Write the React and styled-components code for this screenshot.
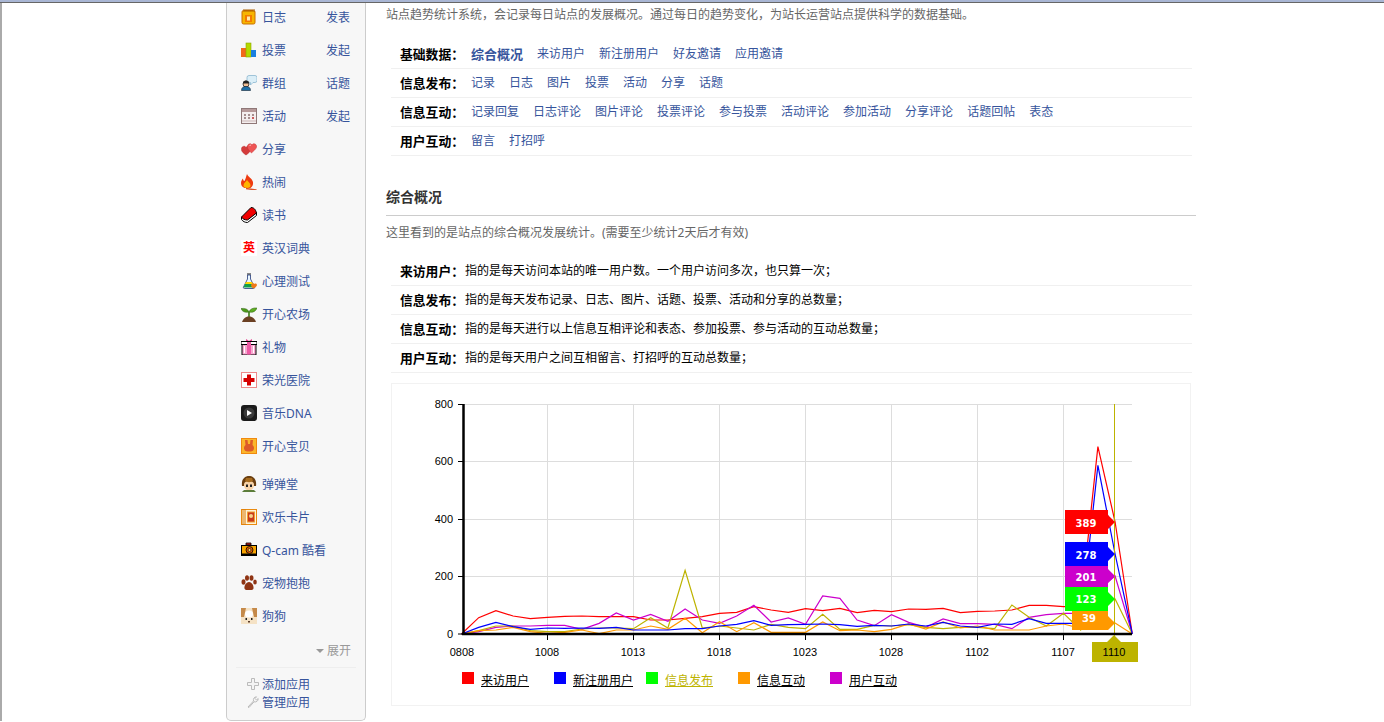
import React from "react";
import styled, { createGlobalStyle } from "styled-components";

const GlobalStyle = createGlobalStyle`
  html, body {
    margin: 0;
    height: 722px;
    overflow: hidden;
    background: #fff;
  }
  body {
    font-family: "Noto Sans", "Noto Sans CJK SC", sans-serif;
    font-size: 12px;
  }
  a {
    color: #36549c;
    text-decoration: none;
  }
`;

// app icons, 16x16
const icons = {
  blog: (
    <>
      <rect x="1" y="1.500" width="13" height="13.500" rx="1.500" fill="#f7b500" stroke="#c96f00" />
      <path d="M3 0v3M5 0v3M7 0v3M9 0v3M11 0v3M13 0v3" stroke="#a85c00" />
      <rect x="4" y="6" width="7" height="7" fill="#f47a00" />
      <rect x="6" y="7.500" width="3" height="4" fill="#ffe9b0" />
    </>
  ),
  vote: (
    <>
      <rect x="0" y="6" width="5" height="9" fill="#f26a1b" />
      <rect x="5" y="1" width="5" height="14" fill="#b5d900" stroke="#8aa800" strokeWidth=".6" />
      <rect x="10" y="8" width="5" height="7" fill="#1a7fe0" />
    </>
  ),
  group: (
    <>
      <path d="M8 .5h6a2 2 0 0 1 2 2v3a2 2 0 0 1-2 2h-2l-2.500 2.500V7.500H8a2 2 0 0 1-2-2v-3a2 2 0 0 1 2-2z" fill="#dbeef7" stroke="#8cb6cf" strokeWidth=".8" />
      <circle cx="5" cy="9" r="3" fill="#f2bf94" stroke="#222" strokeWidth=".8" />
      <path d="M2 8.500a3 3 0 0 1 6 0z" fill="#222" />
      <path d="M0.500 15.500c0-3 1.800-4 4.500-4s4.500 1 4.500 4z" fill="#1c6fa8" stroke="#123" strokeWidth=".6" />
    </>
  ),
  event: (
    <>
      <rect x=".5" y=".5" width="15" height="15" fill="#f4eeee" stroke="#8f7878" />
      <rect x="1" y="1" width="14" height="3" fill="#b79a9a" />
      <path d="M3 7h2M7 7h2M11 7h2M3 10h2M7 10h2M11 10h2" stroke="#8a6f6f" strokeWidth="1.400" />
      <path d="M11 10h2" stroke="#d94c4c" strokeWidth="1.400" />
      <path d="M1 13h14" stroke="#c9b5b5" />
    </>
  ),
  share: (
    <>
      <path d="M5 14C2 12 0 10 .5 7.500 1 5 4 4.500 5 6.500 6 4.500 9 5 9.500 7.500 10 10 8 12 5 14z" fill="#d43b3b" stroke="#b02525" strokeWidth=".5" />
      <path d="M10.500 12C8 9.500 6 7.500 6.500 5 7 2.500 10 2 11 4c1-2 4-1.500 4.500 1 .5 2.500-2.500 4.500-5 7z" fill="#ee5555" stroke="#c53030" strokeWidth=".5" />
      <path d="M8.500 4.500l1.500-.5" stroke="#ffc4c4" />
    </>
  ),
  hot: (
    <>
      <path d="M6 0c1 3 5 4 6 8 .5 3-1 5-2.500 6h-6C1 13 0 11 0 9c0-2 1-3.500 2-4.500 0 1 .5 2.500 1.500 2.500C4.500 5 5 3 6 0z" fill="#ee3b10" />
      <path d="M6 6c1 2 3.500 3 3.500 5.500 0 1.500-1 2.500-3.500 2.500S2.500 13 2.500 11.500C2.500 9 5 8 6 6z" fill="#ffb400" />
      <path d="M5 14.500l10.500 1.500" stroke="#d9532b" strokeWidth="1.500" />
    </>
  ),
  book: (
    <>
      <path d="M.5 10v2.500C2 14.500 4 15.500 6.500 15.500l9-7V6z" fill="#fff" stroke="#000" />
      <path d="M.5 10L10 .5c2.500 0 4.500 1.500 5.500 5.500L6.500 13C4 13 1.500 12 .5 10z" fill="#f00000" stroke="#000" />
    </>
  ),
  test: (
    <>
      <rect x="6" y="0" width="4" height="2" fill="#888" />
      <path d="M6.500 2h3v4l4 8c.4 1-.2 1.500-1 1.500h-9c-.8 0-1.400-.5-1-1.500l4-8z" fill="#e9f6ff" stroke="#223a7a" strokeWidth=".8" />
      <path d="M5 9h6l1 2H4z" fill="#ffd800" />
      <path d="M4 11h8l1.500 3.500h-11z" fill="#12a04a" />
      <path d="M10 12c1-2 3-2 3.500-1 1-1 2.500 0 2.500 1s-2 3-3.500 3.500C11.500 15 10 13.500 10 12z" fill="#ef7a1a" />
    </>
  ),
  farm: (
    <>
      <path d="M8 11V6" stroke="#3a7a12" strokeWidth="1.600" />
      <path d="M8 6C7 3 4 2 0 2.500 1 5.500 4 7 8 6z" fill="#4c9a1a" stroke="#2b5c0c" strokeWidth=".5" />
      <path d="M8 6c1-3 4-4.500 8-4-1 3-4 5-8 4z" fill="#5eae22" stroke="#2b5c0c" strokeWidth=".5" />
      <path d="M1 16c1-3 3-5.500 7-5.500s6 2.500 7 5.500z" fill="#6b4023" />
    </>
  ),
  gift: (
    <>
      <path d="M5 0l3 2 3-2v3H5z" fill="#e83f8f" />
      <rect x="1" y="5" width="14" height="11" fill="#f8a7d0" stroke="#000" />
      <rect x="0" y="2.500" width="16" height="3" fill="#fff" stroke="#000" />
      <rect x="6" y="3" width="4" height="12.500" fill="#ee5aa5" />
      <path d="M3.500 7v7M12.500 7v7" stroke="#fff" />
    </>
  ),
  hospital: (
    <>
      <rect x=".5" y=".5" width="15" height="15" fill="#fff" stroke="#ee8a8a" />
      <path d="M6 2.500h4v3.500h3.500v4H10v3.500H6V10H2.500V6H6z" fill="#d60000" />
    </>
  ),
  music: (
    <>
      <rect width="16" height="16" rx="3" fill="#1b1b1b" />
      <circle cx="8" cy="8" r="5.500" fill="#3a3a3a" />
      <path d="M6 5l5 3-5 3z" fill="#fff" />
    </>
  ),
  baby: (
    <>
      <rect width="16" height="16" fill="#fbb62c" />
      <rect x=".5" y=".5" width="15" height="15" fill="none" stroke="#f08a10" />
      <path d="M4 2h2.500l.5 4h2l.5-4H12l-.5 5c1.500 1 2 3 1 5-1 2-8 2-9 0-1-2-.5-4 1-5z" fill="#dd5a2a" />
    </>
  ),
  ddt: (
    <>
      <path d="M1 10C0 3 4 0 8 0s8 3 7 10z" fill="#6b3f10" />
      <path d="M3 9c0-3 2-4 5-4s5 1 5 4-2 5.500-5 5.500S3 12 3 9z" fill="#f7d3a8" />
      <path d="M4 5c2 1.500 6 1.500 8 0l-1-3H5z" fill="#a86c1e" />
      <path d="M5 8.500h2v2.500H5zM9 8.500h2v2.500H9z" fill="#222" />
      <path d="M3 14l-2 2h14l-2-2z" fill="#5c7d3a" />
    </>
  ),
  card: (
    <>
      <rect x=".5" y=".5" width="15" height="15" fill="#fff3d8" stroke="#e98a10" />
      <path d="M2 0v16M4 0v16" stroke="#d97a08" />
      <rect x="6.500" y="3" width="7" height="10" fill="#c93a1c" stroke="#f0a030" />
      <circle cx="10" cy="7" r="2" fill="#f5d28a" />
    </>
  ),
  cam: (
    <>
      <path d="M5 1h5v2H5z" fill="#c22" stroke="#000" strokeWidth=".8" />
      <rect x=".5" y="3.500" width="15" height="10" fill="#f7a400" stroke="#000" />
      <rect x="1" y="11.500" width="14" height="1.500" fill="#000" />
      <circle cx="8.500" cy="8" r="3.500" fill="#e35a00" stroke="#000" strokeWidth=".8" />
      <circle cx="8.500" cy="8" r="1.500" fill="#ffd860" stroke="#000" strokeWidth=".6" />
    </>
  ),
  paw: (
    <g fill="#8f3413">
      <ellipse cx="2.500" cy="7" rx="2" ry="2.800" />
      <ellipse cx="6" cy="3" rx="2" ry="2.800" />
      <ellipse cx="10.500" cy="3" rx="2" ry="2.800" />
      <ellipse cx="14" cy="7" rx="1.800" ry="2.600" />
      <path d="M8 7c3 0 5 4 4.500 6.500-.5 2-3 1.500-4.500 1.500s-4 .5-4.500-1.500C3 11 5 7 8 7z" />
    </g>
  ),
  dog: (
    <>
      <rect width="16" height="16" fill="#f5e2c5" />
      <path d="M0 0h5L3 9H0zM16 0h-5l2 9h3z" fill="#c58a4a" />
      <ellipse cx="8" cy="6" rx="4" ry="3.500" fill="#fff" />
      <path d="M4.500 10h1.500v2H4.500zM10 10h1.500v2H10z" fill="#222" />
      <path d="M7 13h2v1.500H7z" fill="#5a3a28" />
    </>
  ),
};

const appGroups = [
  [
    { name: "日志", icon: "blog", action: "发表" },
    { name: "投票", icon: "vote", action: "发起" },
    { name: "群组", icon: "group", action: "话题" },
    { name: "活动", icon: "event", action: "发起" },
    { name: "分享", icon: "share" },
    { name: "热闹", icon: "hot" },
    { name: "读书", icon: "book" },
    { name: "英汉词典", glyph: "英" },
    { name: "心理测试", icon: "test" },
    { name: "开心农场", icon: "farm" },
    { name: "礼物", icon: "gift" },
    { name: "荣光医院", icon: "hospital" },
    { name: "音乐DNA", icon: "music" },
    { name: "开心宝贝", icon: "baby" },
  ],
  [
    { name: "弹弹堂", icon: "ddt" },
    { name: "欢乐卡片", icon: "card" },
    { name: "Q-cam 酷看", icon: "cam" },
    { name: "宠物抱抱", icon: "paw" },
    { name: "狗狗", icon: "dog" },
  ],
];

const filters = [
  {
    label: "基础数据：",
    links: ["综合概况", "来访用户", "新注册用户", "好友邀请", "应用邀请"],
    active: "综合概况",
  },
  { label: "信息发布：", links: ["记录", "日志", "图片", "投票", "活动", "分享", "话题"] },
  {
    label: "信息互动：",
    links: ["记录回复", "日志评论", "图片评论", "投票评论", "参与投票", "活动评论", "参加活动", "分享评论", "话题回帖", "表态"],
  },
  { label: "用户互动：", links: ["留言", "打招呼"] },
];

const notes = [
  ["来访用户：", "指的是每天访问本站的唯一用户数。一个用户访问多次，也只算一次；"],
  ["信息发布：", "指的是每天发布记录、日志、图片、话题、投票、活动和分享的总数量；"],
  ["信息互动：", "指的是每天进行以上信息互相评论和表态、参加投票、参与活动的互动总数量；"],
  ["用户互动：", "指的是每天用户之间互相留言、打招呼的互动总数量；"],
];

// 40 days, plotted heights measured from the chart (3x scale, see toY)
const series = [
  {
    color: "#f00",
    ys: [732, 683, 662, 678, 686, 682, 679, 678, 680, 680, 680, 690, 690, 685, 680, 670, 667, 650, 660, 667, 656, 662, 655, 668, 661, 665, 657, 658, 655, 668, 664, 663, 660, 646, 646, 650, 650, 170, 396, 732],
  },
  {
    color: "#c0c",
    ys: [732, 725, 712, 708, 708, 706, 706, 718, 700, 669, 690, 673, 694, 657, 690, 700, 678, 646, 696, 684, 703, 618, 625, 690, 707, 674, 697, 712, 687, 701, 701, 703, 716, 682, 674, 670, 670, 600, 558, 732],
  },
  {
    color: "#bdb300",
    ys: [732, 722, 708, 708, 722, 725, 725, 717, 714, 714, 716, 683, 714, 541, 714, 708, 714, 720, 703, 712, 716, 673, 718, 718, 706, 708, 704, 712, 716, 712, 712, 716, 645, 682, 708, 670, 720, 640, 627, 732],
  },
  {
    color: "#f90",
    ys: [732, 722, 720, 712, 725, 730, 727, 720, 731, 720, 720, 708, 718, 685, 728, 695, 725, 698, 727, 727, 727, 696, 722, 720, 725, 718, 702, 717, 696, 714, 708, 720, 720, 720, 708, 702, 715, 680, 699, 732],
  },
  {
    color: "#00f",
    ys: [732, 712, 697, 710, 718, 714, 715, 714, 715, 712, 720, 720, 720, 716, 716, 708, 703, 692, 706, 704, 703, 702, 704, 709, 706, 708, 702, 708, 697, 708, 712, 702, 703, 686, 700, 700, 700, 226, 492, 732],
  },
];

const tags = [
  { value: 389, color: "#f00", left: 1065, top: 510, bottom: 534, tip: 522, textX: 1086, textY: 523 },
  { value: 278, color: "#00f", left: 1065, top: 542, bottom: 566, tip: 554, textX: 1086, textY: 555 },
  { value: 201, color: "#c0c", left: 1065, top: 566, bottom: 588, tip: 576, textX: 1086, textY: 577 },
  { value: 123, color: "#0f0", left: 1065, top: 587, bottom: 611, tip: 599, textX: 1086, textY: 599 },
  { value: 39, color: "#f90", left: 1072, top: 611, bottom: 630, tip: 623, textX: 1089, textY: 618 },
];

const legend = [
  { name: "来访用户", color: "#f00" },
  { name: "新注册用户", color: "#00f" },
  { name: "信息发布", color: "#0f0", active: true },
  { name: "信息互动", color: "#f90" },
  { name: "用户互动", color: "#c0c" },
];

const toX = (i) => 461.5 + 17.2 * i;
const toY = (y) => 390 + y / 3;

function Chart() {
  const gridY = [404, 461, 519, 576];
  const labelsY = [
    ["800", 404],
    ["600", 461],
    ["400", 519],
    ["200", 576],
    ["0", 634],
  ];
  const labelsX = [
    ["0808", 462],
    ["1008", 547],
    ["1013", 633],
    ["1018", 719],
    ["1023", 805],
    ["1028", 891],
    ["1102", 977],
    ["1107", 1063],
  ];
  return (
    <Plot viewBox="392 384 798 280">
      {gridY.map((y) => (
        <line key={y} x1="458" x2="1132" y1={y + 0.5} y2={y + 0.5} stroke="#ddd" />
      ))}
      {labelsX.slice(1).map(([t, x]) => (
        <line key={t} x1={x + 0.5} x2={x + 0.5} y1="404" y2="634" stroke="#ddd" />
      ))}
      {series.map((s) => (
        <polyline
          key={s.color}
          fill="none"
          stroke={s.color}
          strokeWidth="1.2"
          points={s.ys.map((y, i) => `${toX(i)},${toY(y)}`).join(" ")}
        />
      ))}
      <line x1="1114.500" x2="1114.500" y1="404" y2="636" stroke="#bdb300" />
      <line x1="463.500" x2="463.500" y1="404" y2="635" stroke="#000" strokeWidth="2.500" />
      <line x1="462" x2="1132" y1="634" y2="634" stroke="#000" strokeWidth="2.500" />
      {gridY.map((y) => (
        <line key={y} x1="458" x2="463" y1={y + 0.5} y2={y + 0.5} stroke="#000" />
      ))}
      <line x1="458" x2="463" y1="634" y2="634" stroke="#000" />
      {labelsX.slice(1).map(([t, x]) => (
        <line key={t} x1={x + 0.5} x2={x + 0.5} y1="634" y2="640" stroke="#000" />
      ))}
      {labelsY.map(([t, y]) => (
        <AxisText key={t} x="453" y={y + 4} textAnchor="end">
          {t}
        </AxisText>
      ))}
      {labelsX.map(([t, x]) => (
        <AxisText key={t} x={x} y="656" textAnchor="middle">
          {t}
        </AxisText>
      ))}
      {tags.map((t) => (
        <g key={t.value}>
          <polygon
            fill={t.color}
            points={`${t.left},${t.top} 1108,${t.top} 1108,${t.tip - 7} 1115,${t.tip} 1108,${t.tip + 7} 1108,${t.bottom} ${t.left},${t.bottom}`}
          />
          <TagText x={t.textX} y={t.textY + 4} textAnchor="middle">
            {t.value}
          </TagText>
        </g>
      ))}
      <polygon fill="#bdb300" points="1114,635 1121,642 1138,642 1138,662 1092,662 1092,642 1107,642" />
      <AxisText x="1114" y="656" textAnchor="middle">
        1110
      </AxisText>
    </Plot>
  );
}

export default function App() {
  return (
    <>
      <GlobalStyle />
      <TopEdge />
      <Layout>
        <Sidebar>
          {appGroups.map((group, g) => (
            <AppList key={g} $first={g === 0}>
              {group.map((app) => (
                <AppRow key={app.name}>
                  {app.glyph ? (
                    <GlyphIcon>{app.glyph}</GlyphIcon>
                  ) : (
                    <Icon viewBox="0 0 16 16">{icons[app.icon]}</Icon>
                  )}
                  <a href="#">{app.name}</a>
                  {app.action && <AppAction href="#">{app.action}</AppAction>}
                </AppRow>
              ))}
            </AppList>
          ))}
          <Expand>
            <Caret />
            展开
          </Expand>
          <ManageBox>
            <ManageRow>
              <SmallIcon viewBox="0 0 12 12">
                <path d="M4.500 .5h3v4h4v3h-4v4h-3v-4h-4v-3h4z" fill="#f4f4f4" stroke="#bbb" />
              </SmallIcon>
              <a href="#">添加应用</a>
            </ManageRow>
            <ManageRow>
              <SmallIcon viewBox="0 0 12 12">
                <path d="M1 11l5.500-6C6 3 7 .8 9.500 .8L8 2.500 9.500 4 11.200 2.500C11.500 5 9 6.500 7 5.800L2 11.500z" fill="#f4f4f4" stroke="#bbb" />
              </SmallIcon>
              <a href="#">管理应用</a>
            </ManageRow>
          </ManageBox>
        </Sidebar>
        <Main>
          <Intro>站点趋势统计系统，会记录每日站点的发展概况。通过每日的趋势变化，为站长运营站点提供科学的数据基础。</Intro>
          <Filters>
            {filters.map((row) => (
              <FilterRow key={row.label}>
                <FilterLabel>{row.label}</FilterLabel>
                {row.links.map((link) => (
                  <FilterLink key={link} href="#" $active={link === row.active}>
                    {link}
                  </FilterLink>
                ))}
              </FilterRow>
            ))}
          </Filters>
          <Heading>综合概况</Heading>
          <Desc>这里看到的是站点的综合概况发展统计。(需要至少统计2天后才有效)</Desc>
          <Notes>
            {notes.map(([label, text]) => (
              <NoteRow key={label}>
                <NoteLabel>{label}</NoteLabel>
                {text}
              </NoteRow>
            ))}
          </Notes>
          <ChartBox>
            <Chart />
            <Legend>
              {legend.map((item) => (
                <LegendItem key={item.name}>
                  <Swatch $color={item.color} />
                  <LegendLink href="#" $active={item.active}>
                    {item.name}
                  </LegendLink>
                </LegendItem>
              ))}
            </Legend>
          </ChartBox>
        </Main>
      </Layout>
    </>
  );
}

const TopEdge = styled.div`
  height: 2px;
  background: #a9b6d4;
  border-bottom: 1px solid #666;
`;

const Layout = styled.div`
  box-sizing: border-box;
  display: flex;
  height: 718px;
  padding-left: 224px;
  border-left: 2px solid #aaa;
`;

const Sidebar = styled.aside`
  box-sizing: border-box;
  width: 140px;
  flex: none;
  background: #f7f7f7;
  border: 1px solid #ccc;
  border-top: 0;
  border-radius: 0 0 5px 5px;
`;

const AppList = styled.ul`
  list-style: none;
  margin: ${(props) => (props.$first ? "-3px" : "5px")} 0 0;
  padding: 0;
`;

const AppRow = styled.li`
  display: flex;
  align-items: center;
  height: 33px;
  padding: 0 15px 0 14px;
  gap: 5px;
`;

const Icon = styled.svg`
  width: 16px;
  height: 16px;
  flex: none;
`;

const GlyphIcon = styled.span`
  width: 16px;
  height: 16px;
  flex: none;
  color: #f00;
  background: #fff;
  font-size: 12px;
  font-weight: 700;
  line-height: 16px;
  text-align: center;
`;

const AppAction = styled.a`
  margin-left: auto;
`;

const Expand = styled.div`
  display: flex;
  align-items: center;
  justify-content: flex-end;
  height: 20px;
  margin-top: 8px;
  padding-right: 14px;
  color: #999;
`;

const Caret = styled.i`
  width: 0;
  height: 0;
  margin: 2px 3px 0 0;
  border: 4px solid transparent;
  border-top: 4px solid #999;
  border-bottom: 0;
`;

const ManageBox = styled.div`
  margin: 7px 9px 0;
  padding: 7px 0 0 11px;
  border-top: 1px solid #eee;
`;

const ManageRow = styled.div`
  display: flex;
  align-items: center;
  gap: 3px;
  height: 18px;
`;

const SmallIcon = styled.svg`
  width: 12px;
  height: 12px;
  flex: none;
`;

const Main = styled.main`
  width: 810px;
  margin-left: 20px;
`;

const Intro = styled.p`
  margin: 2px 0 0;
  color: #666;
  line-height: 20px;
`;

const Filters = styled.div`
  margin: 15px 4px 0 5px;
`;

const FilterRow = styled.div`
  box-sizing: border-box;
  display: flex;
  align-items: center;
  height: 29px;
  padding: 0 0 2px 9px;
  border-bottom: 1px solid #f0f0f0;
`;

const FilterLabel = styled.b`
  width: 71px;
  flex: none;
  color: #000;
  font-size: 12.8px;
`;

const FilterLink = styled.a`
  margin-right: 14px;
  font-size: ${(props) => (props.$active ? "13px" : "12px")};
  font-weight: ${(props) => (props.$active ? 700 : 400)};
`;

const Heading = styled.h3`
  margin: 31px 0 0;
  padding-bottom: 8px;
  border-bottom: 1px solid #ccc;
  color: #333;
  font-size: 14px;
  font-weight: 700;
  line-height: 20px;
`;

const Desc = styled.p`
  margin: 7px 0 0;
  color: #666;
  line-height: 20px;
`;

const Notes = styled.div`
  margin: 14px 4px 0 5px;
`;

const NoteRow = styled.div`
  box-sizing: border-box;
  display: flex;
  align-items: center;
  height: 29px;
  padding: 0 0 2px 9px;
  border-bottom: 1px solid #f0f0f0;
  color: #000;
`;

const NoteLabel = styled.b`
  width: 65px;
  flex: none;
  font-size: 12.8px;
`;

const ChartBox = styled.div`
  box-sizing: border-box;
  width: 800px;
  height: 323px;
  margin: 10px 0 0 5px;
  border: 1px solid #f2f2f2;
`;

const Plot = styled.svg`
  display: block;
  width: 798px;
  height: 280px;
`;

const AxisText = styled.text`
  fill: #000;
  font-family: "Liberation Sans", sans-serif;
  font-size: 11px;
`;

const TagText = styled.text`
  fill: #fff;
  font-family: "DejaVu Sans", sans-serif;
  font-size: 10px;
  font-weight: 700;
`;

const Legend = styled.div`
  display: flex;
  margin: 8px 0 0 70px;
`;

const LegendItem = styled.div`
  display: flex;
  align-items: center;
  gap: 7px;
  width: 92px;
  height: 16px;
`;

const Swatch = styled.span`
  width: 12px;
  height: 12px;
  flex: none;
  margin-top: -4px;
  background: ${(props) => props.$color};
`;

const LegendLink = styled.a`
  color: ${(props) => (props.$active ? "#bdb300" : "#000")};
  text-decoration: underline;
`;
